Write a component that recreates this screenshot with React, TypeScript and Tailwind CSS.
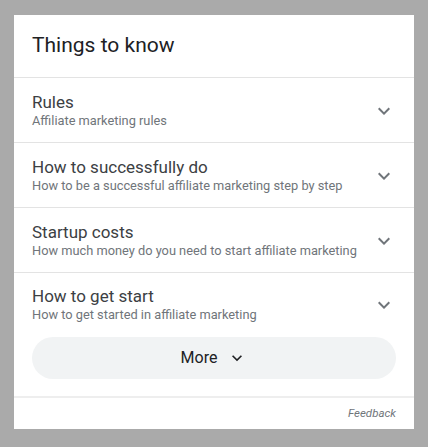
import React from 'react';

const items = [
  { title: 'Rules', sub: 'Affiliate marketing rules' },
  { title: 'How to successfully do', sub: 'How to be a successful affiliate marketing step by step' },
  { title: 'Startup costs', sub: 'How much money do you need to start affiliate marketing' },
  { title: 'How to get start', sub: 'How to get started in affiliate marketing' },
];

const Chevron = ({ className }: { className?: string }) => (
  <svg viewBox="0 0 24 24" className={className} fill="currentColor">
    <path d="M16.59 8.59L12 13.17 7.41 8.59 6 10l6 6 6-6z" />
  </svg>
);

export default function App() {
  return (
    <div className="h-[447px] w-[428px] bg-[#aaaaaa] px-[14px] pt-[15px] font-['Roboto',sans-serif]">
      <div className="w-[400px] bg-white">
        {/* Header */}
        <div className="flex h-[62px] items-center px-[18px] text-[21px] text-[#202124]">
          Things to know
        </div>

        {items.map((item, i) => (
          <div key={item.title} className="border-t border-[#e3e3e3]">
            <div
              className={
                i === items.length - 1
                  ? 'flex items-center pl-[18px] pr-[18px] pt-[13px] pb-[14px]'
                  : 'flex items-center pl-[18px] pr-[18px] pt-[14px] pb-[13px]'
              }
            >
              <div className="flex-1 min-w-0">
                <div className="text-[17px] leading-[21px] text-[#3c4043]">{item.title}</div>
                <div className="text-[12.8px] leading-[16px] text-[#70757a]">{item.sub}</div>
              </div>
              <Chevron className="h-6 w-6 shrink-0 text-[#70757a]" />
            </div>
          </div>
        ))}

        {/* More button */}
        <div className="px-[18px] pb-[17px]">
          <div className="flex h-[42px] items-center justify-center gap-[10px] rounded-full bg-[#f1f3f4] text-[16px] text-[#202124]">
            <span>More</span>
            <Chevron className="h-5 w-5 text-[#202124]" />
          </div>
        </div>

        <div className="h-[2px] bg-[#eeeeee]" />

        {/* Footer */}
        <div className="flex h-[31px] items-center justify-end px-[18px] text-[11.5px] italic text-[#70757a]">
          Feedback
        </div>
      </div>
    </div>
  );
}
